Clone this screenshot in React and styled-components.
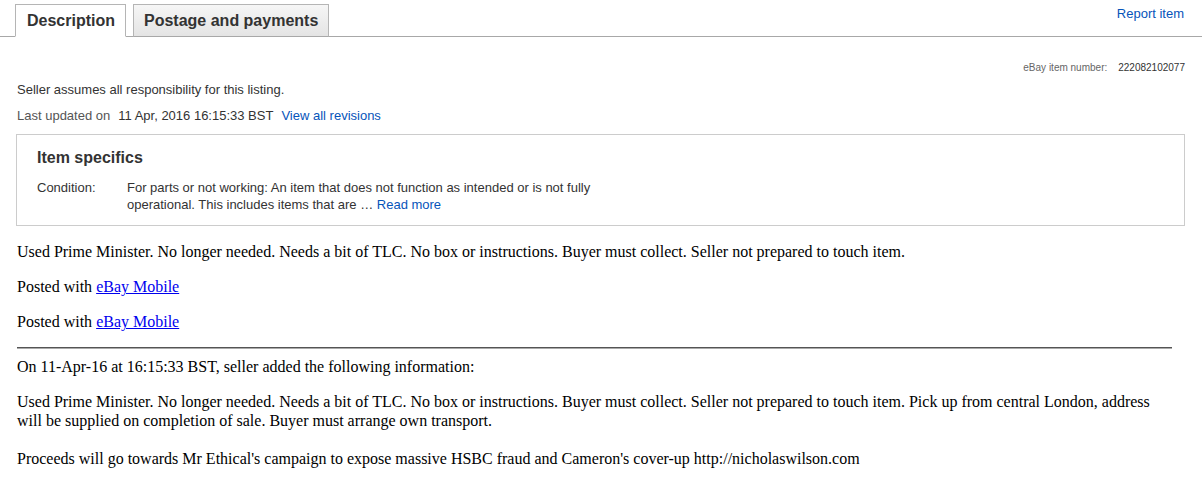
import { createGlobalStyle, styled } from "styled-components";

const GlobalStyle = createGlobalStyle`
  body {
    margin: 0;
    background: #fff;
    font-family: "Liberation Sans", Arial, sans-serif;
    color: #333;
  }
`;

const Page = styled.div`
  width: 1202px;
`;

const TabBar = styled.div`
  display: flex;
  align-items: flex-end;
  height: 36px;
  padding-left: 15px;
  border-bottom: 1px solid #a8a8a8;
`;

const Tab = styled.div`
  display: flex;
  align-items: center;
  height: 31px;
  padding: 0 ${(p) => (p.$active ? "10px" : "10px")} 0 ${(p) => (p.$active ? "11px" : "10px")};
  margin-right: 7px;
  margin-bottom: -1px;
  border: 1px solid #b5b5b5;
  border-bottom: ${(p) => (p.$active ? "1px solid #fff" : "1px solid #a8a8a8")};
  background: ${(p) =>
    p.$active ? "#fff" : "linear-gradient(#f6f6f6, #e4e4e4)"};
  font-size: 16px;
  font-weight: bold;
  color: #333;
`;

const ReportLink = styled.a`
  margin-left: auto;
  align-self: flex-start;
  margin-top: 6px;
  margin-right: 18px;
  font-size: 13px;
  color: #0654ba;
  text-decoration: none;
`;

const Content = styled.div`
  padding: 0 17px 0 16px;
`;

const ItemNumber = styled.div`
  display: flex;
  justify-content: flex-end;
  gap: 11px;
  margin-top: 24px;
  font-size: 10px;
  line-height: 13px;
  color: #666;

  & b {
    font-weight: normal;
    color: #333;
  }
`;

const Note = styled.div`
  margin-top: ${(p) => p.$top || 8}px;
  padding-left: 1px;
  font-size: 13px;
  line-height: 16px;
  color: ${(p) => (p.$muted ? "#555" : "#333")};

  & span {
    color: #333;
    margin-left: 8px;
  }
  & a {
    color: #0654ba;
    text-decoration: none;
    margin-left: 8px;
  }
`;

const Specifics = styled.div`
  margin-top: 10px;
  border: 1px solid #ccc;
  padding: 13px 20px 12px 20px;
`;

const SpecTitle = styled.h3`
  margin: 0 0 12px;
  font-size: 16px;
  line-height: 19px;
  font-weight: bold;
  color: #333;
`;

const SpecRow = styled.div`
  display: grid;
  grid-template-columns: 90px 480px;
  font-size: 13px;
  line-height: 17px;
  color: #333;

  & a {
    color: #0654ba;
    text-decoration: none;
  }
`;

const Listing = styled.div`
  width: 1155px;
  padding-left: 1px;
  font-family: "Liberation Serif", "Times New Roman", serif;
  font-size: 16px;
  line-height: 19px;
  color: #000;

  & p {
    margin: 16px 0;
  }
  & a {
    color: #0000ee;
  }
`;

const Rule = styled.hr`
  margin: 16px 0 8px;
  border: 0;
  border-top: 1px solid #555;
  border-bottom: 1px solid #aaa;
`;

export default function App() {
  return (
    <Page>
      <GlobalStyle />
      <TabBar>
        <Tab $active>Description</Tab>
        <Tab>Postage and payments</Tab>
        <ReportLink href="#">Report item</ReportLink>
      </TabBar>

      <Content>
        <ItemNumber>
          <span>eBay item number:</span>
          <b>222082102077</b>
        </ItemNumber>

        <Note $top={8}>Seller assumes all responsibility for this listing.</Note>
        <Note $top={10} $muted>
          Last updated on<span>11 Apr, 2016 16:15:33 BST</span>
          <a href="#">View all revisions</a>
        </Note>

        <Specifics>
          <SpecTitle>Item specifics</SpecTitle>
          <SpecRow>
            <span>Condition:</span>
            <span>
              For parts or not working: An item that does not function as
              intended or is not fully operational. This includes items that
              are … <a href="#">Read more</a>
            </span>
          </SpecRow>
        </Specifics>

        <Listing>
          <p>
            Used Prime Minister. No longer needed. Needs a bit of TLC. No box or
            instructions. Buyer must collect. Seller not prepared to touch item.
          </p>
          <p>
            Posted with <a href="#">eBay Mobile</a>
          </p>
          <p>
            Posted with <a href="#">eBay Mobile</a>
          </p>
          <Rule />
          <div>On 11-Apr-16 at 16:15:33 BST, seller added the following information:</div>
          <p>
            Used Prime Minister. No longer needed. Needs a bit of TLC. No box or
            instructions. Buyer must collect. Seller not prepared to touch item.
            Pick up from central London, address will be supplied on completion
            of sale. Buyer must arrange own transport.
            <br />
            <br />
            Proceeds will go towards Mr Ethical's campaign to expose massive HSBC
            fraud and Cameron's cover-up http://nicholaswilson.com
          </p>
        </Listing>
      </Content>
    </Page>
  );
}
